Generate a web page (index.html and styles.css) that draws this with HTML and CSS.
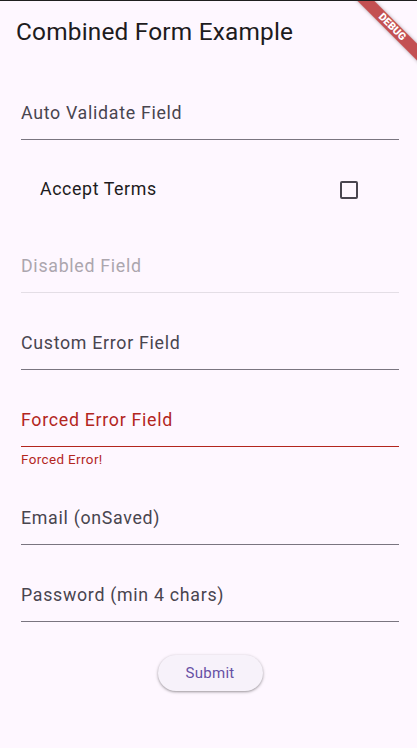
FILE: index.html
```html
<!DOCTYPE html>
<html lang="en">
<head>
<meta charset="utf-8">
<title>Combined Form Example</title>
<link rel="stylesheet" href="styles.css">
</head>
<body>
<div class="app">
  <header class="appbar">
    <h1 class="title">Combined Form Example</h1>
  </header>
  <div class="banner"><span>DEBUG</span></div>
  <main class="form">
    <div class="field"><span class="label">Auto Validate Field</span></div>
    <div class="check-row">
      <span class="check-label">Accept Terms</span>
      <span class="checkbox"></span>
    </div>
    <div class="field disabled"><span class="label">Disabled Field</span></div>
    <div class="field"><span class="label">Custom Error Field</span></div>
    <div class="field-group">
      <div class="field error"><span class="label">Forced Error Field</span></div>
      <div class="error-text">Forced Error!</div>
    </div>
    <div class="field"><span class="label">Email (onSaved)</span></div>
    <div class="field"><span class="label">Password (min 4 chars)</span></div>
    <div class="actions">
      <button class="btn" type="button">Submit</button>
    </div>
  </main>
</div>
</body>
</html>
```
FILE: styles.css
```css
html, body {
  margin: 0;
  padding: 0;
  background: #fef7ff;
}
body {
  font-family: Roboto, "Noto Sans", sans-serif;
  color: #1d1b20;
}
.app {
  position: relative;
  width: 417px;
  height: 748px;
  overflow: hidden;
  background: #fef7ff;
  border-top: 1px solid #1f1f1f;
  box-sizing: border-box;
}
.appbar {
  height: 63px;
  display: flex;
  align-items: center;
  padding-left: 16px;
}
.title {
  margin: 0;
  font-size: 24.4px;
  font-weight: 400;
  line-height: 28px;
  letter-spacing: 0.2px;
  color: #1d1b20;
  position: relative;
  top: -0.5px;
}
.banner {
  position: absolute;
  top: 20px;
  left: 332px;
  width: 120px;
  height: 12px;
  background: rgba(176, 28, 28, 0.76);
  transform: rotate(45deg);
  box-shadow: 0 0 4px rgba(0, 0, 0, 0.3);
  display: flex;
  align-items: center;
  justify-content: center;
}
.banner span {
  color: #ffffff;
  font-size: 10.5px;
  font-weight: 900;
  line-height: 12px;
}
.form {
  display: flex;
  flex-direction: column;
  gap: 20px;
  padding: 19px 18px 0 21px;
}
.field {
  height: 57px;
  box-sizing: border-box;
  padding-top: 18px;
  border-bottom: 1px solid #7a7580;
}
.label {
  display: block;
  font-size: 17.8px;
  line-height: 24px;
  letter-spacing: 0.7px;
  color: #49454f;
}
.field.disabled {
  border-bottom-color: #e4dee6;
}
.field.disabled .label {
  color: #aca6ae;
}
.field.error {
  border-bottom-color: #b3261e;
}
.field.error .label {
  color: #b3261e;
}
.error-text {
  padding-top: 5px;
  font-size: 13.4px;
  line-height: 16px;
  letter-spacing: 0.4px;
  color: #b3261e;
}
.check-row {
  height: 56px;
  margin-top: 1px;
  margin-bottom: -1px;
  display: flex;
  align-items: center;
  justify-content: space-between;
  padding: 0 41px 0 19px;
}
.check-label {
  font-size: 17.8px;
  line-height: 24px;
  letter-spacing: 0.6px;
  color: #1d1b20;
}
.checkbox {
  width: 18px;
  height: 18px;
  box-sizing: border-box;
  border: 2px solid #49454f;
  border-radius: 2px;
  position: relative;
  top: 0.5px;
}
.actions {
  margin-top: 13px;
  display: flex;
  justify-content: center;
}
.btn {
  width: 105px;
  height: 36px;
  border: none;
  border-radius: 18px;
  background: #f7f2fa;
  color: #6750a4;
  font-family: Roboto, "Noto Sans", sans-serif;
  font-size: 15px;
  font-weight: 400;
  letter-spacing: 0.3px;
  box-shadow: 0 1px 2px rgba(0, 0, 0, 0.25), 0 1px 3px 1px rgba(0, 0, 0, 0.12);
  padding: 0;
}
```
